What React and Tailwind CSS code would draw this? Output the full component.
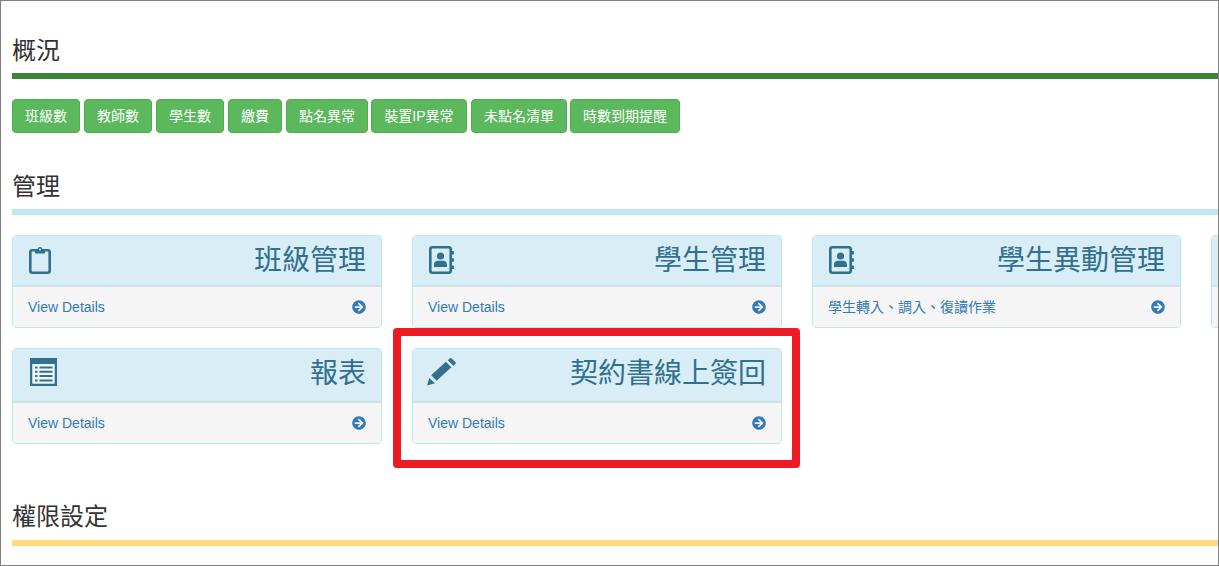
import React from "react";
import { FaArrowCircleRight } from "react-icons/fa";

const buttons = [
  { text: "班級數", cls: "" },
  { text: "教師數", cls: "" },
  { text: "學生數", cls: "" },
  { text: "繳費", cls: "" },
  { text: "點名異常", cls: "" },
  { text: "裝置IP異常", cls: "-ml-px w-[96px] px-0" },
  { text: "未點名清單", cls: "" },
  { text: "時數到期提醒", cls: "-ml-px" },
];

const ClipboardIcon = () => (
  <svg width="22" height="28" viewBox="0 0 22 28" className="block ml-px" fill="none">
    <rect x="1.3" y="4.3" width="19.4" height="22.4" rx="2" stroke="#31708f" strokeWidth="2.6" />
    <path d="M6 3.500h2.500a2.500 2.500 0 0 1 5 0H16v4H6z" fill="#31708f" />
    <circle cx="11" cy="3.400" r="1" fill="#d9edf7" />
  </svg>
);

const BookIcon = () => (
  <svg width="25" height="28" viewBox="0 0 25 28" className="block ml-px">
    <rect x="1.300" y="1.300" width="20.400" height="25.400" rx="2" fill="none" stroke="#31708f" strokeWidth="2.600" />
    <circle cx="11.500" cy="10" r="3.600" fill="#31708f" />
    <path d="M5 21v-2.500c0-2.500 2-3.700 3.600-3.700h5.800c1.600 0 3.600 1.200 3.600 3.700V21z" fill="#31708f" />
    <path d="M22 5h2a1 1 0 0 1 0 3.400h-2zM22 12.300h2a1 1 0 0 1 0 3.400h-2zM22 19.600h2a1 1 0 0 1 0 3.400h-2z" fill="#31708f" />
  </svg>
);

const ListIcon = () => (
  <svg width="27" height="28" viewBox="0 0 27 28" className="block -mt-px ml-[2px]">
    <path fillRule="evenodd" d="M0 0h27v28H0zM2.500 6v19.500h22V6z" fill="#31708f" />
    <rect x="2.500" y="6" width="22" height="19.500" fill="#eef6fa" />
    <path d="M5 8.500h2.500v2H5zM9.500 8.500h13v2h-13zM5 12.800h2.500v2H5zM9.500 12.800h13v2h-13zM5 17.100h2.500v2H5zM9.500 17.100h13v2h-13zM5 21.400h2.500v2H5zM9.500 21.400h13v2h-13z" fill="#31708f" />
  </svg>
);

const PencilIcon = () => (
  <svg width="29" height="28" viewBox="0 0 30 29" className="block -mt-px -ml-px">
    <path d="M0 28.500 2.400 20.600 8.200 26.200z" fill="#31708f" />
    <path d="M4.300 17.800 19.500 3.800 25.200 9.500 10 23.500z" fill="#31708f" />
    <path d="M21.500 2.300 23.500.4a1.400 1.400 0 0 1 2 0l3.800 3.700a1.400 1.400 0 0 1 0 2L27.300 8z" fill="#31708f" />
  </svg>
);

const SectionTitle = ({ text, barColor, barGap = "mt-[9px]", className }) => (
  <div className={className}>
    <h2 className="pt-px text-[24px] leading-[26px] font-normal text-[#333333]">{text}</h2>
    <div className={`h-[6px] ${barGap} ${barColor}`} />
  </div>
);

const Card = ({ icon, title, footer = "View Details", headerHeight, width = "w-[370px]" }) => (
  <div className={`shrink-0 overflow-hidden rounded border border-[#bce8f1] ${width}`}>
    <div className={`flex items-start justify-between border-b border-[#bce8f1] bg-[#d9edf7] px-[15px] pt-[10px] text-[#31708f] ${headerHeight}`}>
      <div>{icon}</div>
      <div className="text-[28px] leading-[30px]">{title}</div>
    </div>
    <div className="flex h-[41px] items-center justify-between border-t border-[#dddddd] bg-[#f5f5f5] px-[15px] text-[14px] text-[#337ab7]">
      <span>{footer}</span>
      <FaArrowCircleRight className="h-[14px] w-[14px]" />
    </div>
  </div>
);

export default function App() {
  return (
    <div
      className="relative h-[566px] w-[1219px] overflow-hidden border border-[#808080] bg-white pl-[11px] pt-[36px] text-[#333333]"
      style={{ fontFamily: '"Liberation Sans", "Noto Sans CJK TC", sans-serif' }}
    >
      <SectionTitle text="概況" barColor="bg-[#3c8538]" />

      <div className="mt-[20px] flex gap-[4px]">
        {buttons.map((b) => (
          <button
            key={b.text}
            className={`h-[34px] rounded border border-[#4cae4c] bg-[#5cb85c] px-[12px] text-[14px] text-white ${b.cls}`}
          >
            {b.text}
          </button>
        ))}
      </div>

      <SectionTitle text="管理" barColor="bg-[#bce8f1]" className="mt-[40px]" />

      <div className="mt-[20px] flex gap-[30px]">
        <Card icon={<ClipboardIcon />} title="班級管理" headerHeight="h-[50px]" />
        <Card icon={<BookIcon />} title="學生管理" headerHeight="h-[50px]" />
        <Card icon={<BookIcon />} title="學生異動管理" footer="學生轉入、調入、復讀作業" headerHeight="h-[50px]" width="w-[369px]" />
        <Card headerHeight="h-[50px]" footer="" />
      </div>

      <div className="mt-[20px] flex gap-[30px]">
        <Card icon={<ListIcon />} title="報表" headerHeight="h-[53px]" />
        <Card icon={<PencilIcon />} title="契約書線上簽回" headerHeight="h-[53px]" />
      </div>

      <SectionTitle text="權限設定" barColor="bg-[#ffd97d]" barGap="mt-[10px]" className="mt-[59px]" />

      {/* red highlight over the contract card */}
      <div className="absolute left-[392px] top-[327px] h-[140px] w-[407px] rounded border-[8px] border-[#ed1c24]" />
    </div>
  );
}
